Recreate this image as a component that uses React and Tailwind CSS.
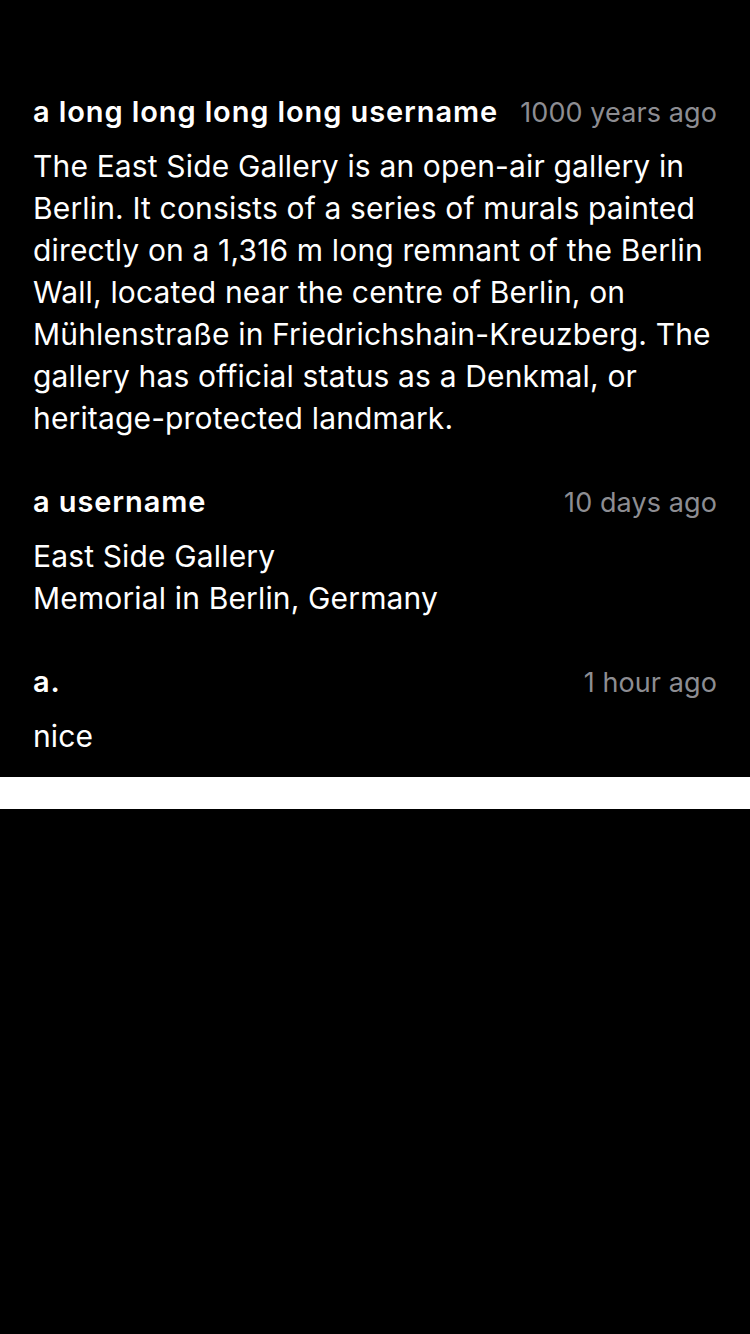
import React from 'react';

const comments = [
    {
        user: 'a long long long long username',
        time: '1000 years ago',
        body: 'The East Side Gallery is an open-air gallery in Berlin. It consists of a series of murals painted directly on a 1,316 m long remnant of the Berlin Wall, located near the centre of Berlin, on Mühlenstraße in Friedrichshain-Kreuzberg. The gallery has official status as a Denkmal, or heritage-protected landmark.',
    },
    {
        user: 'a username',
        time: '10 days ago',
        body: 'East Side Gallery\nMemorial in Berlin, Germany',
    },
    {
        user: 'a.',
        time: '1 hour ago',
        body: 'nice',
    },
];

const Comment = ({ user, time, body }) => (
    <div>
        <div className="flex items-baseline justify-between gap-5 h-[40px] leading-[40px]">
            <span className="text-[29px] font-semibold tracking-[0.9px] text-white truncate">{user}</span>
            <span className="text-[27px] tracking-[0.1px] text-[#8d8d92] shrink-0">{time}</span>
        </div>
        <p className="mt-[13px] text-[30px] tracking-[0.15px] leading-[42px] text-white whitespace-pre-line">{body}</p>
    </div>
);

export default function App() {
    return (
        <div className="w-[750px] h-[1334px] bg-black flex flex-col" style={{ fontFamily: 'Inter, "Noto Sans", sans-serif' }}>
            {/* comments list */}
            <div className="px-[33px] pt-[92px] pb-[20px] flex flex-col gap-[43px]">
                {comments.map((c, i) => (
                    <Comment key={i} {...c} />
                ))}
            </div>
            {/* divider band */}
            <div className="h-[32px] bg-white" />
            <div className="flex-1 bg-black" />
        </div>
    );
}
